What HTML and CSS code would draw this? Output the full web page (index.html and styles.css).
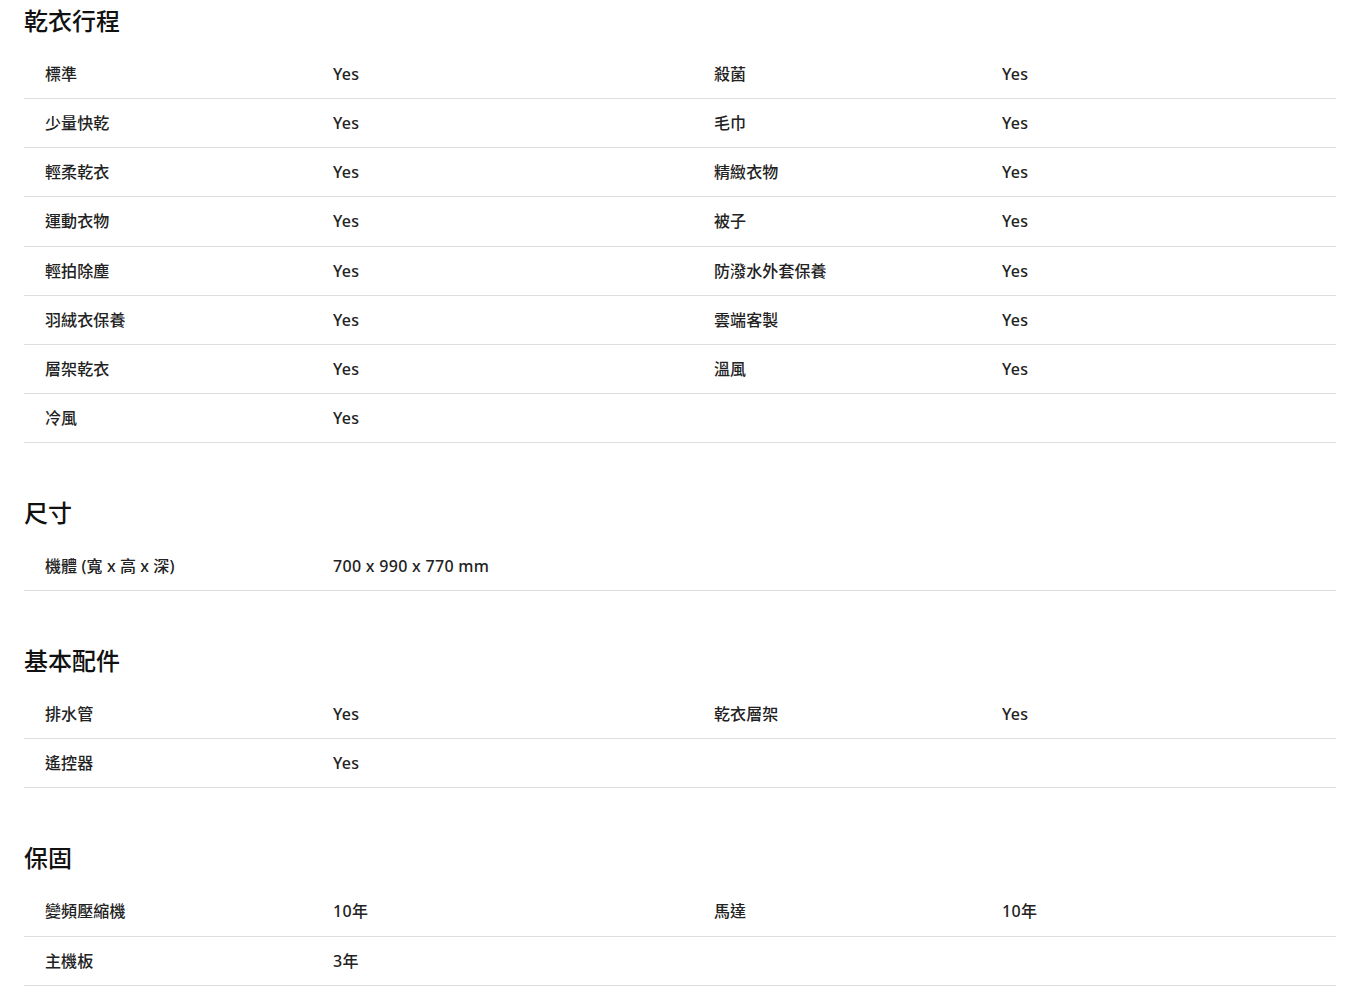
FILE: index.html
```html
<!DOCTYPE html>
<html lang="zh-Hant">
<head>
<meta charset="utf-8">
<link rel="stylesheet" href="styles.css">
</head>
<body>
<main class="specs">
  <section class="group">
    <h2 class="group-title">乾衣行程</h2>
    <div class="row"><span class="label">標準</span><span class="value">Yes</span><span class="label">殺菌</span><span class="value">Yes</span></div>
    <div class="row"><span class="label">少量快乾</span><span class="value">Yes</span><span class="label">毛巾</span><span class="value">Yes</span></div>
    <div class="row"><span class="label">輕柔乾衣</span><span class="value">Yes</span><span class="label">精緻衣物</span><span class="value">Yes</span></div>
    <div class="row"><span class="label">運動衣物</span><span class="value">Yes</span><span class="label">被子</span><span class="value">Yes</span></div>
    <div class="row"><span class="label">輕拍除塵</span><span class="value">Yes</span><span class="label">防潑水外套保養</span><span class="value">Yes</span></div>
    <div class="row"><span class="label">羽絨衣保養</span><span class="value">Yes</span><span class="label">雲端客製</span><span class="value">Yes</span></div>
    <div class="row"><span class="label">層架乾衣</span><span class="value">Yes</span><span class="label">溫風</span><span class="value">Yes</span></div>
    <div class="row"><span class="label">冷風</span><span class="value">Yes</span></div>
  </section>
  <section class="group">
    <h2 class="group-title">尺寸</h2>
    <div class="row"><span class="label">機體 (寬 x 高 x 深)</span><span class="value">700 x 990 x 770 mm</span></div>
  </section>
  <section class="group">
    <h2 class="group-title">基本配件</h2>
    <div class="row"><span class="label">排水管</span><span class="value">Yes</span><span class="label">乾衣層架</span><span class="value">Yes</span></div>
    <div class="row"><span class="label">遙控器</span><span class="value">Yes</span></div>
  </section>
  <section class="group">
    <h2 class="group-title">保固</h2>
    <div class="row"><span class="label">變頻壓縮機</span><span class="value">10年</span><span class="label">馬達</span><span class="value">10年</span></div>
    <div class="row"><span class="label">主機板</span><span class="value">3年</span></div>
  </section>
</main>
</body>
</html>
```
FILE: styles.css
```css
* { box-sizing: border-box; }
html, body { margin: 0; padding: 0; background: #fff; }
body {
  font-family: "Noto Sans", "Noto Sans CJK TC", sans-serif;
  color: #1a1a1a;
}
.specs {
  padding: 5px 27px 0 24px;
}
.group + .group { margin-top: 54px; }
.group-title {
  margin: 0 0 13px;
  font-size: 24px;
  line-height: 32px;
  font-weight: 500;
  color: #111;
}
.row {
  display: grid;
  grid-template-columns: 288px 381px 288px 1fr;
  align-items: center;
  height: 49.14px;
  padding-left: 21px;
  border-bottom: 1px solid #dedede;
  font-size: 16px;
  line-height: 24px;
}
.label { font-weight: 500; color: #222; letter-spacing: 0.1px; }
.value { font-weight: 500; color: #222; letter-spacing: 0.3px; }
```
